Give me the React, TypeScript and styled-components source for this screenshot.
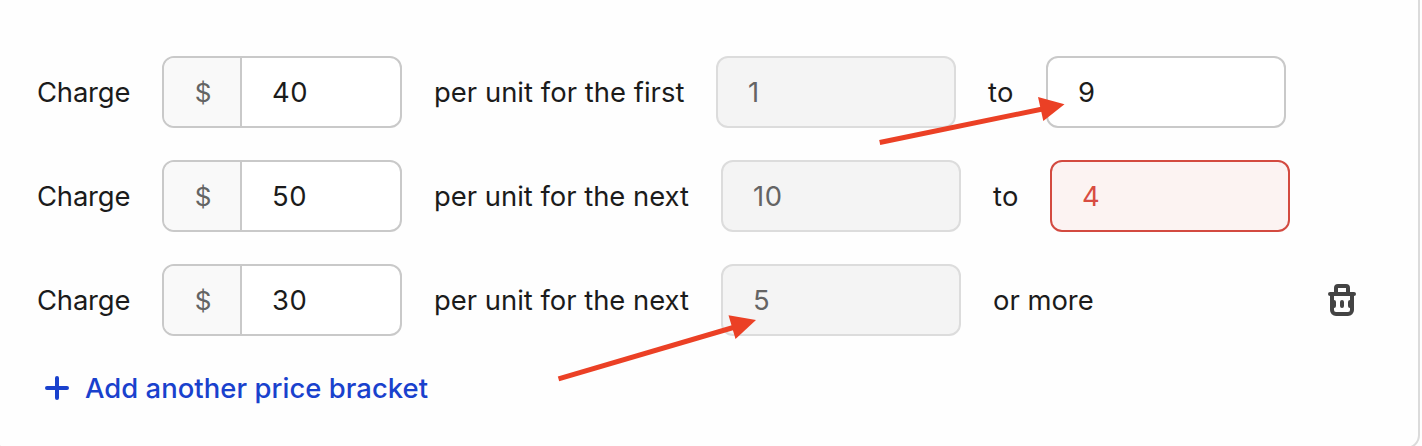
import React from "react";
import styled, { createGlobalStyle, css } from "styled-components";

const GlobalStyle = createGlobalStyle`
  * { box-sizing: border-box; }
  html, body { margin: 0; height: 446px; overflow: hidden; background: #fefefe; }
  body { font-family: Inter, "Liberation Sans", sans-serif; font-size: 27.4px; color: #1b1b1b; }
`;

const Viewport = styled.main`
  width: 1422px;
  height: 446px;
  overflow: hidden;
  position: relative;
`;

const Card = styled.section`
  width: 1428px;
  height: 463px;
  margin: -14px 0 0 -8px;
  padding: 68px 0 0 45px;
  border: 2px solid #dbdbdb;
  border-radius: 14px;
  background: #fefefe;
`;

const Brackets = styled.div`
  display: flex;
  flex-direction: column;
  gap: 32px;
`;

const Row = styled.div`
  display: flex;
  align-items: center;
  height: 72px;
  margin-left: -2px;
`;

const Label = styled.span<{ $width: number; $spacing?: number }>`
  flex: none;
  width: ${(p) => p.$width}px;
  margin-right: 32px;
  padding-top: 1px;
  line-height: 41px;
  white-space: nowrap;
  letter-spacing: ${(p) => p.$spacing ?? 0}px;
`;

type Tone = "normal" | "muted" | "error";

const tones = {
  normal: css`border-color: #c9c9c9; background: #fff; color: #1b1b1b;`,
  muted: css`border-color: #dcdcdc; background: #f4f4f4; color: #646464;`,
  error: css`border-color: #d34a40; background: #fcf3f2; color: #d84c42;`,
};

const Field = styled.div<{ $tone?: Tone }>`
  flex: none;
  display: flex;
  align-items: center;
  width: 240px;
  height: 72px;
  margin-right: 32px;
  border: 2px solid;
  border-radius: 12px;
  overflow: hidden;
  ${(p) => tones[p.$tone ?? "normal"]}
`;

const Currency = styled.span`
  width: 78px;
  height: 100%;
  padding: 1px 0 0 2px;
  display: flex;
  align-items: center;
  justify-content: center;
  border-right: 2px solid #c9c9c9;
  background: #f9f9f9;
  color: #646464;
  font-size: 26px;
`;

const Value = styled.span`
  padding: 1px 0 0 30px;
  line-height: 41px;
  letter-spacing: 0.5px;
`;

const DeleteButton = styled.button`
  margin: 0 62px 0 auto;
  padding: 0;
  border: 0;
  background: none;
  color: #434343;
  display: flex;
`;

const AddButton = styled.button`
  display: flex;
  align-items: center;
  gap: 16px;
  margin: 31px 0 0 6px;
  padding: 0;
  border: 0;
  background: none;
  color: #1941cd;
  font: 500 27.4px/40px Inter, "Liberation Sans", sans-serif;
  letter-spacing: 0.06px;
`;

const AddLabel = styled.span`
  padding-top: 1px;
`;

const Annotations = styled.svg`
  position: absolute;
  inset: 0;
  pointer-events: none;
`;

const TrashIcon = () => (
  <svg width="28" height="32" viewBox="0 0 28 32" fill="none" stroke="currentColor" strokeWidth="4" strokeLinecap="round" strokeLinejoin="round">
    <path d="M2 10h24M8 10V4a2 2 0 0 1 2-2h8a2 2 0 0 1 2 2v6M4 10v16a4 4 0 0 0 4 4h12a4 4 0 0 0 4-4V10" />
    <path d="M14 18v4M6 18v4M22 18v4" />
  </svg>
);

const PlusIcon = () => (
  <svg width="24" height="24" viewBox="0 0 24 24" fill="none" stroke="currentColor" strokeWidth="4" strokeLinecap="round">
    <path d="M12 2v20M2 12h20" />
  </svg>
);

const PriceField = ({ value }: { value: string }) => (
  <Field>
    <Currency>$</Currency>
    <Value>{value}</Value>
  </Field>
);

export default function App() {
  return (
    <Viewport>
      <GlobalStyle />
      <Card>
        <Brackets>
          <Row>
            <Label $width={93} $spacing={-0.16}>Charge</Label>
            <PriceField value="40" />
            <Label $width={250} $spacing={0.04}>per unit for the first</Label>
            <Field $tone="muted"><Value>1</Value></Field>
            <Label $width={26} $spacing={0.4}>to</Label>
            <Field><Value>9</Value></Field>
          </Row>
          <Row>
            <Label $width={93} $spacing={-0.16}>Charge</Label>
            <PriceField value="50" />
            <Label $width={255}>per unit for the next</Label>
            <Field $tone="muted"><Value>10</Value></Field>
            <Label $width={25} $spacing={0.4}>to</Label>
            <Field $tone="error"><Value>4</Value></Field>
          </Row>
          <Row>
            <Label $width={93} $spacing={-0.16}>Charge</Label>
            <PriceField value="30" />
            <Label $width={255}>per unit for the next</Label>
            <Field $tone="muted"><Value>5</Value></Field>
            <Label $width={100}>or more</Label>
            <DeleteButton aria-label="Delete bracket"><TrashIcon /></DeleteButton>
          </Row>
        </Brackets>
        <AddButton><PlusIcon /><AddLabel>Add another price bracket</AddLabel></AddButton>
      </Card>
      <Annotations width="1422" height="446" viewBox="0 0 1422 446" fill="#eb4025" stroke="#eb4025">
        <path d="M879.7 142.5L1045 108.5" strokeWidth="5" />
        <path d="M1064.5 104.3L1038 97L1043.3 121Z" stroke="none" />
        <path d="M558.5 378.8L735 327" strokeWidth="5" />
        <path d="M756 320L728.5 315.2L735.5 339Z" stroke="none" />
      </Annotations>
    </Viewport>
  );
}
